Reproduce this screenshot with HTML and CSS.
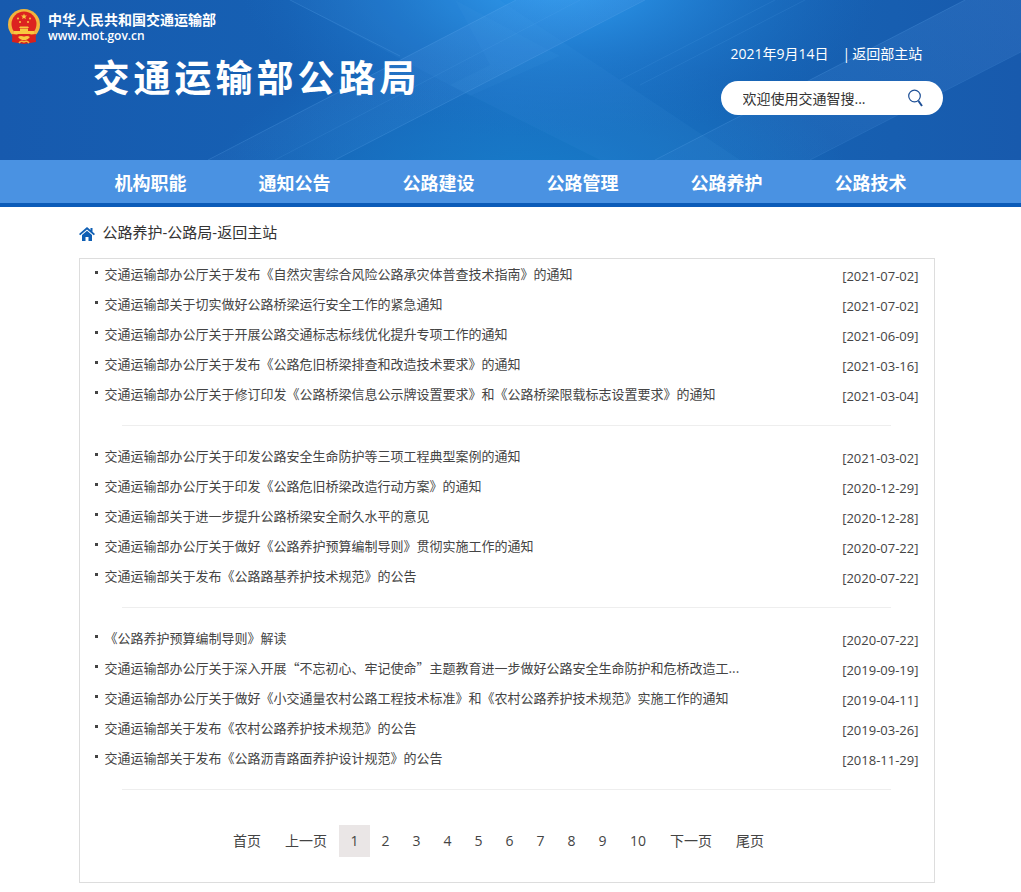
FILE: index.html
```
<!DOCTYPE html>
<html lang="zh-CN">
<head>
    <meta charset="UTF-8">
    <meta name="viewport" content="width=device-width, initial-scale=1.0">
    <title>公路养护-交通运输部公路局</title>
    <link rel="stylesheet" href="styles.css">
</head>
<body>

<header class="header">
    <svg class="header-bg" viewBox="0 0 1021 160" preserveAspectRatio="xMidYMid slice" aria-hidden="true">
        <defs>
            <radialGradient id="glow" cx="0" cy="0" r="1" gradientUnits="userSpaceOnUse" gradientTransform="translate(560 -20) scale(320 160)">
                <stop offset="0" stop-color="#2f9ff2"/>
                <stop offset="0.3" stop-color="#2890e4" stop-opacity="0.75"/>
                <stop offset="1" stop-color="#1a6fc4" stop-opacity="0"/>
            </radialGradient>
            <radialGradient id="low" cx="0" cy="0" r="1" gradientUnits="userSpaceOnUse" gradientTransform="translate(530 180) scale(320 130)">
                <stop offset="0" stop-color="#177ac8"/>
                <stop offset="1" stop-color="#177ac8" stop-opacity="0"/>
            </radialGradient>
            <linearGradient id="base">
                <stop offset="0" stop-color="#175aae"/>
                <stop offset="0.28" stop-color="#1660b3"/>
                <stop offset="0.5" stop-color="#1a6cbf"/>
                <stop offset="0.75" stop-color="#1662b3"/>
                <stop offset="1" stop-color="#185aad"/>
            </linearGradient>
            <linearGradient id="fade" x1="0" y1="1" x2="1" y2="0">
                <stop offset="0" stop-color="#5f9fe8" stop-opacity="0.06"/>
                <stop offset="1" stop-color="#5f9fe8" stop-opacity="0.18"/>
            </linearGradient>
        </defs>
        <rect width="1021" height="160" fill="url(#base)"/>
        <rect width="1021" height="160" fill="url(#low)"/>
        <rect width="1021" height="160" fill="url(#glow)"/>
        <g fill="url(#fade)">
            <path d="M516 0H580L275 160H208z"/>
            <path d="M580 0H645L335 160H275z"/>
            <path d="M965 0H1021V52L810 160H655z"/>
        </g>
        <g fill="#5aa7ee" fill-opacity="0.07">
            <path d="M290 0H455L560 56L470 96z"/>
            <path d="M455 0H500L740 160H600L450 85L490 65z"/>
        </g>
        <g fill="none" stroke="#6db5f5" stroke-opacity="0.2">
            <path d="M516 0L208 160M645 0L335 160M965 0L655 160M290 0L400 56"/>
            <path d="M580 0L275 160M775 0L620 80M805 0L640 85M1021 52L810 160" stroke-opacity="0.12"/>
        </g>
    </svg>
    <div class="brand">
        <svg class="emblem" viewBox="0 0 32 36" aria-hidden="true">
            <path d="M5 25l-1 8 6 1 6 1 6-1 6-1-1-8z" fill="#d8201c"/>
            <ellipse cx="16" cy="15.500" rx="16" ry="15.500" fill="#f2b53c"/>
            <circle cx="16" cy="15" r="12.500" fill="#dc2320"/>
            <path d="M16 4.500l.8 2 2.200.1-1.700 1.400.6 2.100-1.900-1.200-1.900 1.200.6-2.100L13 6.600l2.200-.1z" fill="#f8c840"/>
            <g fill="#f8c840">
                <circle cx="10" cy="9.500" r="1"/>
                <circle cx="22" cy="9.500" r="1"/>
                <circle cx="12" cy="13" r="1"/>
                <circle cx="20" cy="13" r="1"/>
                <path d="M12 17.500h8l1 1.500H11zM12 19.500h8V22h-8zM6 22h20v3H6z"/>
            </g>
            <path d="M4 25q6 0 12 3 6-3 12-3l-1 8q-6-2-11 1-5-3-11-1z" fill="#d8201c"/>
            <path d="M10 28q3-2 6 0 3-2 6 0-3 4-6 3-3 1-6-3z" fill="#f8c840"/>
            <path d="M11 34q2-3 5-1 3-2 5 1" fill="none" stroke="#f2b53c" stroke-width="1.500"/>
        </svg>
        <div class="brand-text">
            <div>中华人民共和国交通运输部</div>
            <div class="brand-url">www.mot.gov.cn</div>
        </div>
    </div>
    <div class="wrap header-main">
        <h1>交通运输部公路局</h1>
        <div class="tools">
            <div class="top-links"><span>2021年9月14日</span><span class="back">|<a href="#">返回部主站</a></span></div>
            <form class="search">
                <input type="text" value="欢迎使用交通智搜..." aria-label="搜索">
                <button type="button" aria-label="搜索">
                    <svg viewBox="0 0 18 18" aria-hidden="true">
                        <circle cx="7.500" cy="7" r="5.800" fill="none" stroke="#1d4f96" stroke-width="1.200"/>
                        <path d="M11.500 12l3.500 5" stroke="#1d4f96" stroke-width="2"/>
                    </svg>
                </button>
            </form>
        </div>
    </div>
</header>

<nav class="nav">
    <div class="wrap nav-list">
        <a href="#">机构职能</a>
        <a href="#">通知公告</a>
        <a href="#">公路建设</a>
        <a href="#">公路管理</a>
        <a href="#">公路养护</a>
        <a href="#">公路技术</a>
    </div>
</nav>

<main class="wrap main">
    <div class="crumbs">
        <svg viewBox="0 0 16 14" aria-hidden="true">
            <path d="M8 0L0 7l1.200 1.300L8 2.500l6.800 5.800L16 7l-2.500-2.200V1h-2v2z" fill="#0f5fb4"/>
            <path d="M8 3.800L3 8v6h3.500v-4h3v4H13V8z" fill="#0f5fb4"/>
        </svg>
        <span><a href="#">公路养护</a>-<a href="#">公路局</a>-<a href="#">返回主站</a></span>
    </div>

    <div class="panel">
        <ul class="news">
            <li><a href="#">交通运输部办公厅关于发布《自然灾害综合风险公路承灾体普查技术指南》的通知</a><span class="date">[2021-07-02]</span></li>
            <li><a href="#">交通运输部关于切实做好公路桥梁运行安全工作的紧急通知</a><span class="date">[2021-07-02]</span></li>
            <li><a href="#">交通运输部办公厅关于开展公路交通标志标线优化提升专项工作的通知</a><span class="date">[2021-06-09]</span></li>
            <li><a href="#">交通运输部办公厅关于发布《公路危旧桥梁排查和改造技术要求》的通知</a><span class="date">[2021-03-16]</span></li>
            <li><a href="#">交通运输部办公厅关于修订印发《公路桥梁信息公示牌设置要求》和《公路桥梁限载标志设置要求》的通知</a><span class="date">[2021-03-04]</span></li>
        </ul>
        <ul class="news">
            <li><a href="#">交通运输部办公厅关于印发公路安全生命防护等三项工程典型案例的通知</a><span class="date">[2021-03-02]</span></li>
            <li><a href="#">交通运输部办公厅关于印发《公路危旧桥梁改造行动方案》的通知</a><span class="date">[2020-12-29]</span></li>
            <li><a href="#">交通运输部关于进一步提升公路桥梁安全耐久水平的意见</a><span class="date">[2020-12-28]</span></li>
            <li><a href="#">交通运输部办公厅关于做好《公路养护预算编制导则》贯彻实施工作的通知</a><span class="date">[2020-07-22]</span></li>
            <li><a href="#">交通运输部关于发布《公路路基养护技术规范》的公告</a><span class="date">[2020-07-22]</span></li>
        </ul>
        <ul class="news">
            <li><a href="#">《公路养护预算编制导则》解读</a><span class="date">[2020-07-22]</span></li>
            <li><a href="#">交通运输部办公厅关于深入开展“不忘初心、牢记使命”主题教育进一步做好公路安全生命防护和危桥改造工...</a><span class="date">[2019-09-19]</span></li>
            <li><a href="#">交通运输部办公厅关于做好《小交通量农村公路工程技术标准》和《农村公路养护技术规范》实施工作的通知</a><span class="date">[2019-04-11]</span></li>
            <li><a href="#">交通运输部关于发布《农村公路养护技术规范》的公告</a><span class="date">[2019-03-26]</span></li>
            <li><a href="#">交通运输部关于发布《公路沥青路面养护设计规范》的公告</a><span class="date">[2018-11-29]</span></li>
        </ul>
        <div class="pager">
            <a href="#">首页</a>
            <a href="#">上一页</a>
            <a href="#" class="num current">1</a>
            <a href="#" class="num">2</a>
            <a href="#" class="num">3</a>
            <a href="#" class="num">4</a>
            <a href="#" class="num">5</a>
            <a href="#" class="num">6</a>
            <a href="#" class="num">7</a>
            <a href="#" class="num">8</a>
            <a href="#" class="num">9</a>
            <a href="#">10</a>
            <a href="#">下一页</a>
            <a href="#">尾页</a>
        </div>
    </div>
</main>

</body>
</html>
```
FILE: styles.css
```
* { box-sizing: border-box; }
body {
    margin: 0;
    background: #fff;
    color: #333;
    font-family: "Open Sans", "Noto Sans CJK SC", sans-serif;
    font-size: 14px;
}
a { color: inherit; text-decoration: none; }
.wrap { max-width: 864px; margin: 0 auto; }

/* header */
.header {
    position: relative;
    min-height: 160px;
    padding-top: 9px;
    background: #1760b3;
    color: #fff;
}
.header-bg {
    position: absolute;
    top: 0;
    left: 0;
    width: 100%;
    height: 100%;
}
.brand {
    position: relative;
    display: flex;
    gap: 8px;
    height: 35px;
    padding-left: 8px;
}
.emblem { width: 32px; height: 36px; }
.brand-text { padding-top: 2px; font-size: 14px; font-weight: 600; line-height: 18px; }
.brand-url { font-size: 12px; line-height: 14px; }
.header-main {
    position: relative;
    display: flex;
    justify-content: space-between;
    padding-left: 14px;
}
h1 {
    margin: 7px 0 0;
    font-size: 37px;
    font-weight: 700;
    line-height: 54px;
    letter-spacing: 4px;
}
.tools { width: 222px; }
.top-links {
    display: flex;
    gap: 14px;
    padding-left: 10px;
    line-height: 20px;
}
.back { display: flex; gap: 2px; }
.search {
    display: flex;
    align-items: center;
    height: 34px;
    margin-top: 17px;
    padding: 0 18px 0 22px;
    background: #fff;
    border-radius: 17px;
}
.search input {
    flex: 1;
    min-width: 0;
    padding: 0;
    border: none;
    outline: none;
    background: none;
    color: #333;
    font: inherit;
}
.search button {
    width: 18px;
    height: 18px;
    padding: 0;
    border: none;
    background: none;
    cursor: pointer;
}
.search svg { display: block; }

/* nav */
.nav { background: #4a92e2; border-bottom: 4px solid #0b5bb8; }
.nav-list { display: flex; }
.nav-list a {
    flex: 1;
    padding-top: 4px;
    color: #fff;
    font-size: 18px;
    font-weight: 700;
    line-height: 39px;
    text-align: center;
}
.nav-list a:hover { background: #0b5bb8; }

/* content */
.main { padding: 0 8px 9px 0; }
.crumbs {
    display: flex;
    align-items: center;
    gap: 8px;
    height: 51px;
    font-size: 15px;
}
.crumbs svg { width: 16px; height: 14px; margin-top: 3px; }
.crumbs span { padding-bottom: 2px; }
.panel { border: 1px solid #ddd; }
.news { margin: 0; padding: 0; list-style: none; }
.news li {
    display: flex;
    align-items: center;
    gap: 7px;
    height: 30px;
    padding: 0 15px;
    color: #444;
    font-size: 13px;
}
.news li::before {
    content: "";
    width: 3px;
    height: 3px;
    margin-bottom: 3px;
    background: #444;
}
/* CJK face first so the curly quotes are full width */
.news a {
    flex: 1;
    padding-bottom: 2px;
    font-family: "Noto Sans CJK SC", sans-serif;
}
.news a:hover { color: #0b5bb8; }
.date { padding-top: 4px; }
.news::after {
    content: "";
    display: block;
    margin: 16px 43px 15px 42px;
    border-top: 1px solid #eee;
}

.pager {
    display: flex;
    justify-content: center;
    padding: 20px 16px 25px 0;
    color: #444;
}
.pager a {
    padding: 0 12px;
    line-height: 32px;
    text-align: center;
}
.pager .num { min-width: 31px; padding: 0 11px; }
.pager .current { background: #eae6e6; }
```
